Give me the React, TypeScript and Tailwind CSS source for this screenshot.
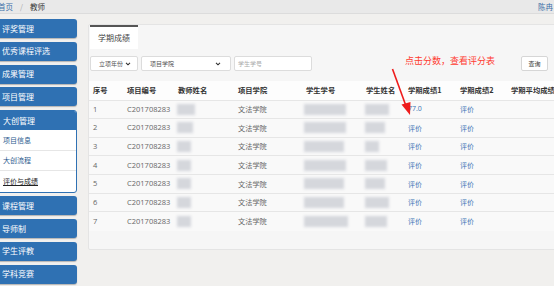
import React from "react";

const font = { fontFamily: '"Noto Sans CJK SC", "Liberation Sans", sans-serif' };
const latin = { fontFamily: '"Open Sans", "Noto Sans CJK SC", sans-serif' };

const menu = ["评奖管理", "优秀课程评选", "成果管理", "项目管理"];
const menu2 = ["课程管理", "导师制", "学生评教", "学科竞赛", "学院管理"];

const cols = ["w-[34px]", "w-[51px]", "w-[60px]", "w-[68px]", "w-[60px]", "w-[42px]", "w-[52px]", "w-[51px]", "w-[80px]"];
const heads = ["序号", "项目编号", "教师姓名", "项目学院", "学生学号", "学生姓名", "学期成绩1", "学期成绩2", "学期平均成绩"];

const Blur = ({ w }: { w: number }) => (
  <div className="h-[11px] bg-[#d5d7dc] blur-[1.5px]" style={{ width: w }} />
);

const SideBtn = ({ label }: { label: string }) => (
  <div className="h-[19px] flex items-center rounded-[3px] bg-[#2f71b3] text-white text-[8px] pl-[8px] ml-[-6px] shadow-[0_1px_1px_rgba(0,0,0,0.25)] whitespace-nowrap">
    {label}
  </div>
);

const Chevron = () => (
  <svg width="6" height="4" viewBox="0 0 7 5">
    <path d="M1 1l2.5 2.5L6 1" stroke="#333" strokeWidth="1.4" fill="none" />
  </svg>
);

export default function App() {
  const rows = [1, 2, 3, 4, 5, 6, 7];
  const nameW = [18, 16, 14, 14, 14, 14, 14];
  const idW = [42, 42, 40, 42, 40, 40, 44];
  const sW = [24, 20, 14, 22, 20, 24, 22];

  return (
    <div className="w-[554px] h-[286px] overflow-hidden bg-[#f1f0ee] relative" style={font}>
      {/* top bar */}
      <div className="h-[14px] bg-[#e9e9e9] flex items-center justify-between text-[7.5px] border-b border-[#dcdcdc]">
        <div className="flex items-center gap-[7px] ml-[-2px]">
          <span className="text-[#3b6ea8]">首页</span>
          <span className="text-[#aaa]">/</span>
          <span className="text-[#333]">教师</span>
        </div>
        <span className="text-[#3b6ea8] mr-[1px]">陈冉</span>
      </div>

      <div className="flex">
        {/* sidebar */}
        <div className="w-[77px] pt-[5px] flex flex-col gap-[3.75px] shrink-0">
          {menu.map((m) => (
            <SideBtn key={m} label={m} />
          ))}
          <div className="ml-[-6px] rounded-[3px] border border-[#2f71b3] bg-white overflow-hidden">
            <div className="h-[19px] flex items-center bg-[#2f71b3] text-white text-[8px] pl-[8px]">大创管理</div>
            <div className="h-[20.5px] flex items-center pl-[8px] text-[7px] text-[#2b5a8e] border-b border-[#e6e6e6]">项目信息</div>
            <div className="h-[20.5px] flex items-center pl-[8px] text-[7px] text-[#2b5a8e] border-b border-[#e6e6e6]">大创流程</div>
            <div className="h-[20.5px] flex items-center pl-[8px] text-[7px] text-[#222]">
              <span className="underline">评价与成绩</span>
            </div>
          </div>
          {menu2.map((m) => (
            <SideBtn key={m} label={m} />
          ))}
        </div>

        {/* main */}
        <div className="pl-[11px] pt-[10px]">
          <div className="w-[480px] bg-[#f6f6f6] border border-[#e4e4e4] rounded-l-[2px] h-[226px]">
            <div className="flex h-[24px]">
              <div className="ml-[1px] w-[48px] bg-white border-t-2 border-[#555] flex items-center justify-center text-[8px] text-[#444]">
                学期成绩
              </div>
            </div>

            <div className="flex items-center mt-[7px] px-[1px] gap-[3px] text-[6px] text-[#555] whitespace-nowrap">
              <div className="w-[48px] h-[15px] bg-white border border-[#dcdcdc] rounded-[2px] flex items-center justify-between pl-[8px] pr-[6px]">
                <span>立项年份</span>
                <Chevron />
              </div>
              <div className="w-[90px] h-[15px] bg-white border border-[#dcdcdc] rounded-[2px] flex items-center justify-between pl-[8px] pr-[9px]">
                <span>项目学院</span>
                <Chevron />
              </div>
              <div className="w-[78px] h-[15px] bg-white border border-[#dcdcdc] rounded-[2px] flex items-center px-[3px] text-[#aaa]">
                学生学号
              </div>
              <div className="ml-[90px] text-[9px] text-[#ff3b30] leading-none mt-[-6px]">点击分数，查看评分表</div>
              <div className="ml-[23px] w-[27px] h-[15px] bg-white border border-[#d6d6d6] rounded-[2px] flex items-center justify-center text-[6px] text-[#333]">
                查询
              </div>
            </div>

            <table className="mt-[10px] border-collapse text-left table-fixed w-[478px]">
              <colgroup>
                {cols.map((c, i) => (
                  <col key={i} className={c} />
                ))}
              </colgroup>
              <thead>
                <tr className="h-[19px] bg-[#fdfdfd]">
                  {heads.map((h) => (
                    <th key={h} className="pl-[4px] text-[7.3px] font-bold text-[#333] whitespace-nowrap">
                      {h}
                    </th>
                  ))}
                </tr>
              </thead>
              <tbody>
                {rows.map((r, i) => (
                  <tr key={r} className="h-[18.67px] bg-[#f9f9f9] border-t border-[#e6e6e6] text-[7.5px] text-[#666]">
                    <td className="pl-[4px]" style={latin}>{r}</td>
                    <td className="pl-[4px]" style={latin}>C201708283</td>
                    <td className="pl-[3px]"><Blur w={nameW[i]} /></td>
                    <td className="pl-[4px] text-[7.2px]">文法学院</td>
                    <td className="pl-[2px]"><Blur w={idW[i]} /></td>
                    <td className="pl-[3px]"><Blur w={sW[i]} /></td>
                    <td className="pl-[4px] text-[7px] text-[#3a74b5]" style={i === 0 ? latin : undefined}>
                      {i === 0 ? "77.0" : "评价"}
                    </td>
                    <td className="pl-[4px] text-[7px] text-[#3a74b5]">评价</td>
                    <td></td>
                  </tr>
                ))}
              </tbody>
            </table>
          </div>
        </div>
      </div>

      {/* annotation arrow */}
      <svg className="absolute left-0 top-0 pointer-events-none" width="554" height="286">
        <line x1="392.5" y1="69" x2="406" y2="106" stroke="#ee1c1c" strokeWidth="1.6" />
        <path d="M401.5 104.5 L410 115 L410.5 102 Z" fill="#ee1c1c" />
      </svg>
    </div>
  );
}
